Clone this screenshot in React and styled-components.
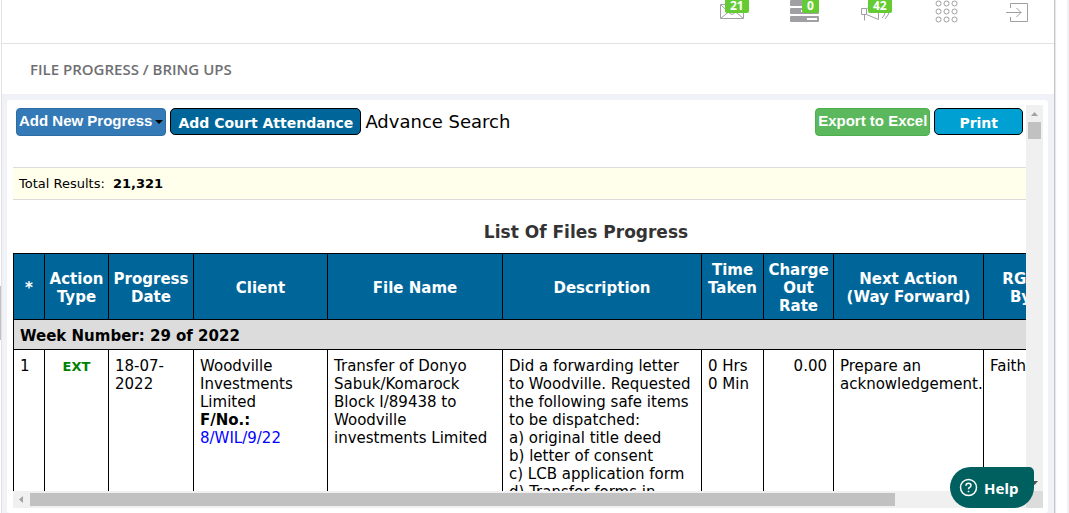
import React from "react";
import styled, { createGlobalStyle } from "styled-components";

const verdana = `Verdana, "DejaVu Sans", sans-serif`;
const openSans = `"Open Sans", "Noto Sans", sans-serif`;

const GlobalStyle = createGlobalStyle`
  * { box-sizing: border-box; }
  html, body { margin: 0; height: 100%; overflow: hidden; }
  body { background: #fff; color: #000; font-family: ${verdana}; font-size: 15px; line-height: 18px; }
  #root { height: 100%; }
`;

const Page = styled.div`
  display: flex;
  height: 100vh;
  border-right: 2px solid #f1f1f3;
  padding-right: 12px;
`;

const Gutter = styled.div`
  width: 1px;
  display: flex;
  flex-direction: column;
  justify-content: center;
  padding-top: 112px;
  &::before { content: ""; height: 54px; background: #c1c1c1; }
`;

const Shell = styled.div`
  flex: 1;
  min-width: 0;
  display: flex;
  flex-direction: column;
  border-left: 1px solid #e2e2e4;
  border-right: 1px solid #c6c6ca;
  box-shadow: 1px 0 1px #e8e8e8;
`;

const Header = styled.header`
  flex: none;
  height: 44px;
  display: flex;
  justify-content: flex-end;
  gap: 43px;
  padding-right: 23px;
  border-bottom: 1px solid #e2e2e4;
`;

const IconLink = styled.a`
  position: relative;
  width: 28px;
  height: 24px;
  color: #a0a0a4;
  svg { display: block; }
`;

const Badge = styled.span`
  position: absolute;
  left: ${(p) => p.$left}px;
  top: -3px;
  padding: 0 5px;
  height: 16px;
  border-radius: 2px;
  background: #65cb33;
  color: #fff;
  font: 700 12px/17px ${openSans};
`;

const TitleBar = styled.div`
  flex: none;
  height: 50px;
  padding: 0 28px;
  display: flex;
  align-items: center;
`;

const PageTitle = styled.h1`
  margin: 0;
  font: 600 15px/20px ${openSans};
  color: #6f6f73;
`;

const Backdrop = styled.main`
  flex: 1;
  min-height: 0;
  display: flex;
  padding: 6px 6px 0 5px;
  background: #f0f2f7;
`;

const Card = styled.section`
  flex: 1;
  min-width: 0;
  padding: 5px 5px 5px 6px;
  background: #fff;
  border-radius: 3px;
`;

const ScrollFrame = styled.div`
  height: 100%;
  display: grid;
  grid-template: minmax(0, 1fr) 17px / minmax(0, 1fr) 17px;
`;

const Viewport = styled.div`
  overflow: hidden;
`;

const Track = styled.div`
  display: flex;
  flex-direction: ${(p) => (p.$vertical ? "column" : "row")};
  justify-content: space-between;
  background: #f0f0f0;
`;

const Arrow = styled.svg`
  flex: none;
  width: 17px;
  height: 17px;
  fill: ${(p) => (p.$dark ? "#505050" : "#a3a3a3")};
`;

const Rail = styled.div`
  flex: 1;
  display: flex;
  flex-direction: ${(p) => (p.$vertical ? "column" : "row")};
  padding: ${(p) => (p.$vertical ? "0 2px" : "2px 0")};
`;

const Thumb = styled.div`
  background: #c1c1c1;
  flex: 0 0 ${(p) => p.$size};
`;

const Corner = styled.div`
  background: #dcdcdc;
`;

const Toolbar = styled.div`
  display: flex;
  align-items: flex-start;
  gap: 4px;
  padding: 3px 3px 0;
  height: 62px;
`;

const Spacer = styled.div`
  flex: 1;
`;

const BootButton = styled.button`
  height: 28px;
  padding: 0 2px 2px;
  display: flex;
  align-items: center;
  gap: 3px;
  white-space: nowrap;
  border: 1px solid ${(p) => (p.$green ? "#4cae4c" : "#2e6da4")};
  border-radius: 4px;
  background: ${(p) => (p.$green ? "#5cb85c" : "#337ab7")};
  color: #fff;
  font: 700 15px/18px Arial, "Liberation Sans", sans-serif;
`;

const Caret = styled.span`
  border: 4px solid transparent;
  border-top-color: #000;
  border-bottom: 0;
  margin-top: 2px;
`;

const PlainButton = styled.button`
  height: 27px;
  padding: 2px ${(p) => (p.$wide ? 24 : 7)}px 0;
  white-space: nowrap;
  border: 1px solid #000;
  border-radius: 5px;
  background: ${(p) => (p.$light ? "#00a0d2" : "#006699")};
  color: #fff;
  font: 700 14px/18px ${verdana};
`;

const SearchLink = styled.a`
  color: #000;
  text-decoration: none;
  font-size: 18px;
  line-height: 28px;
`;

const Wide = styled.div`
  width: 1146px;
`;

const Results = styled.div`
  height: 33px;
  padding: 0 6px;
  border: solid #dcdcdc;
  border-width: 1px 0;
  background: #ffffec;
  font-size: 13px;
  line-height: 32px;
  b { margin-left: 4px; }
`;

const Caption = styled.h2`
  margin: 0;
  padding: 21px 0 10px;
  text-align: center;
  color: #333;
  font-size: 17px;
  line-height: 22px;
`;

const Table = styled.table`
  width: 100%;
  table-layout: fixed;
  border-collapse: collapse;
  th, td { border: 1px solid #000; }
`;

const HeadCell = styled.th`
  height: 66px;
  padding: 7px 0 4px;
  background: #006699;
  color: #fff;
  white-space: nowrap;
  vertical-align: ${(p) => (p.$top ? "top" : "middle")};
`;

const WeekCell = styled.th`
  height: 30px;
  padding: 3px 6px 0;
  text-align: left;
  background: #dcdcdc;
`;

const Cell = styled.td`
  height: 240px;
  padding: 7px 6px;
  vertical-align: top;
  white-space: nowrap;
  text-align: ${(p) => p.$align || "left"};
`;

const Tag = styled.b`
  color: #008000;
  font-size: 13px;
`;

const FileLink = styled.a`
  color: #00f;
  text-decoration: none;
`;

const HelpButton = styled.button`
  position: fixed;
  right: 35px;
  bottom: 5px;
  width: 84px;
  height: 41px;
  display: flex;
  align-items: center;
  gap: 6px;
  padding: 0 0 0 9px;
  border: 0;
  border-radius: 21px 5px 21px 21px;
  background: #006060;
  color: #fff;
  font: 700 15px/20px "Noto Sans", sans-serif;
`;

const widths = [31, 64, 85, 134, 175, 199, 62, 70, 150, 74, 102];

const headings = [
  ["*"],
  ["Action", "Type"],
  ["Progress", "Date"],
  ["Client"],
  ["File Name"],
  ["Description"],
  ["Time", "Taken"],
  ["Charge", "Out", "Rate"],
  ["Next Action", "(Way Forward)"],
  ["RGD", "By"],
  [],
];

const Lines = ({ of }) =>
  of.map((line, i) => (
    <React.Fragment key={i}>
      {i > 0 && <br />}
      {line}
    </React.Fragment>
  ));

const MailIcon = () => (
  <svg width="28" height="24" fill="none" stroke="currentColor">
    <path d="M1.500 4.500h23v14h-23zM2 5l7.500 7M24 5l-7.500 7M2 18l7.500-6M24 18l-7.500-6M9.500 12q3.500 4.500 7 0" />
  </svg>
);

const ServerIcon = () => (
  <svg width="30" height="24">
    <g fill="currentColor">
      <rect width="29" height="6" rx="1" />
      <rect y="8" width="29" height="6" rx="1" />
      <rect y="16" width="29" height="6" rx="1" />
    </g>
    <path d="M17 3h10M11 11h16M17 19h10" stroke="#fff" strokeWidth="2" />
  </svg>
);

const HornIcon = () => (
  <svg width="30" height="24" fill="none" stroke="currentColor">
    <path d="M.5 8.500h5v6h-5zM5.500 8.500L17.500 4v15.500L5.500 14.500M3.500 14.500v6M21 18q3-2.500 3.500-7M24 19q4-4 4.500-9" />
  </svg>
);

const GridIcon = () => (
  <svg width="28" height="24" fill="none" stroke="currentColor">
    {[4, 12, 20].map((y) =>
      [6, 14, 22].map((x) => <circle key={x + "-" + y} cx={x + 0.5} cy={y - 0.5} r="2.500" />)
    )}
  </svg>
);

const ExitIcon = () => (
  <svg width="28" height="24" fill="none" stroke="currentColor">
    <path d="M7.500 8V3.500h17v18h-17V17M3 12.500h15M13.500 8l4.500 4.500-4.500 4.500" />
  </svg>
);

export default function App() {
  return (
    <Page>
      <GlobalStyle />
      <Gutter />
      <Shell>
        <Header>
          <IconLink href="#mail" aria-label="Messages"><MailIcon /><Badge $left={6}>21</Badge></IconLink>
          <IconLink href="#tasks" aria-label="Tasks"><ServerIcon /><Badge $left={12}>0</Badge></IconLink>
          <IconLink href="#notices" aria-label="Notices"><HornIcon /><Badge $left={7}>42</Badge></IconLink>
          <IconLink href="#apps" aria-label="Apps"><GridIcon /></IconLink>
          <IconLink href="#logout" aria-label="Log out"><ExitIcon /></IconLink>
        </Header>
        <TitleBar><PageTitle>FILE PROGRESS / BRING UPS</PageTitle></TitleBar>
        <Backdrop>
          <Card>
            <ScrollFrame>
              <Viewport>
                <Toolbar>
                  <BootButton>Add New Progress<Caret /></BootButton>
                  <PlainButton>Add Court Attendance</PlainButton>
                  <SearchLink href="#search">Advance Search</SearchLink>
                  <Spacer />
                  <BootButton $green>Export to Excel</BootButton>
                  <PlainButton $light $wide>Print</PlainButton>
                </Toolbar>
                <Wide>
                  <Results>Total Results: <b>21,321</b></Results>
                  <Caption>List Of Files Progress</Caption>
                  <Table>
                    <colgroup>{widths.map((w, i) => <col key={i} width={w} />)}</colgroup>
                    <thead>
                      <tr>
                        {headings.map((h, i) => (
                          <HeadCell key={i} $top={h[0] === "Time"}><Lines of={h} /></HeadCell>
                        ))}
                      </tr>
                    </thead>
                    <tbody>
                      <tr><WeekCell colSpan={11}>Week Number: 29 of 2022</WeekCell></tr>
                      <tr>
                        <Cell>1</Cell>
                        <Cell $align="center"><Tag>EXT</Tag></Cell>
                        <Cell><Lines of={["18-07-", "2022"]} /></Cell>
                        <Cell>
                          <Lines of={["Woodville", "Investments", "Limited"]} /><br />
                          <b>F/No.:</b><br />
                          <FileLink href="#file">8/WIL/9/22</FileLink>
                        </Cell>
                        <Cell><Lines of={["Transfer of Donyo", "Sabuk/Komarock", "Block I/89438 to", "Woodville", "investments Limited"]} /></Cell>
                        <Cell>
                          <Lines of={["Did a forwarding letter", "to Woodville. Requested", "the following safe items", "to be dispatched:", "a) original title deed", "b) letter of consent", "c) LCB application form", "d) Transfer forms in"]} />
                        </Cell>
                        <Cell><Lines of={["0 Hrs", "0 Min"]} /></Cell>
                        <Cell $align="right">0.00</Cell>
                        <Cell><Lines of={["Prepare an", "acknowledgement."]} /></Cell>
                        <Cell>Faith</Cell>
                        <Cell />
                      </tr>
                    </tbody>
                  </Table>
                </Wide>
              </Viewport>
              <Track $vertical>
                <Arrow><path d="M5 11l3.500-4 3.500 4z" /></Arrow>
                <Rail $vertical><Thumb $size="17px" /></Rail>
                <Arrow $dark><path d="M5 7l3.500 4L12 7z" /></Arrow>
              </Track>
              <Track>
                <Arrow><path d="M10 5L6 8.500l4 3.500z" /></Arrow>
                <Rail><Thumb $size="88.400%" /></Rail>
                <Arrow $dark><path d="M7 5l4 3.500L7 12z" /></Arrow>
              </Track>
              <Corner />
            </ScrollFrame>
          </Card>
        </Backdrop>
      </Shell>
      <HelpButton>
        <svg width="19" height="19" fill="none" stroke="#fff" strokeWidth="1.500">
          <circle cx="9.500" cy="9.500" r="8" />
          <path d="M7 7.700q0-2.500 2.500-2.500T12 7.500q0 1.200-1.300 1.900T9.500 11.200M9.500 12.700v1.600" />
        </svg>
        Help
      </HelpButton>
    </Page>
  );
}
